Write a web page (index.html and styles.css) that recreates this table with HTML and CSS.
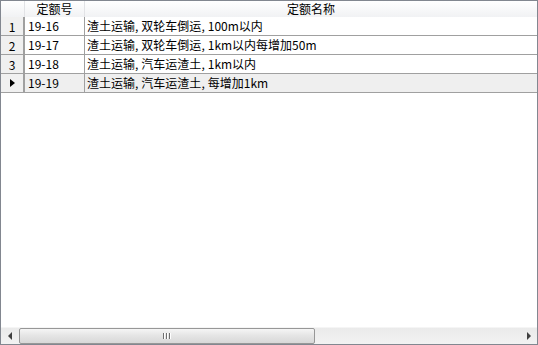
FILE: index.html
```html
<!DOCTYPE html>
<html lang="zh-CN">
<head>
<meta charset="utf-8">
<link rel="stylesheet" href="styles.css">
</head>
<body>
<div class="grid">
  <div class="body">
    <div class="row head">
      <div class="rh"></div>
      <div class="c1">定额号</div>
      <div class="c2">定额名称</div>
    </div>
    <div class="row">
      <div class="rh">1</div>
      <div class="c1">19-16</div>
      <div class="c2">渣土运输<span class="cm">,</span>双轮车倒运<span class="cm">,</span>100m以内</div>
    </div>
    <div class="row">
      <div class="rh">2</div>
      <div class="c1">19-17</div>
      <div class="c2">渣土运输<span class="cm">,</span>双轮车倒运<span class="cm">,</span>1km以内每增加50m</div>
    </div>
    <div class="row">
      <div class="rh">3</div>
      <div class="c1">19-18</div>
      <div class="c2">渣土运输<span class="cm">,</span>汽车运渣土<span class="cm">,</span>1km以内</div>
    </div>
    <div class="row cur">
      <div class="rh"><span class="ind"></span></div>
      <div class="c1">19-19</div>
      <div class="c2">渣土运输<span class="cm">,</span>汽车运渣土<span class="cm">,</span>每增加1km</div>
    </div>
  </div>
  <div class="hscroll">
    <div class="btn"><span class="al"></span></div>
    <div class="track">
      <div class="thumb"><span class="grip"></span><span class="grip"></span><span class="grip"></span></div>
    </div>
    <div class="btn"><span class="ar"></span></div>
  </div>
</div>
</body>
</html>
```
FILE: styles.css
```css
html, body { margin: 0; padding: 0; background: #fff; }
body { font-family: "Noto Sans CJK SC", "Liberation Sans", sans-serif; font-size: 12px; color: #000; }
.grid {
  width: 538px; height: 345px; box-sizing: border-box;
  border: 1px solid #828790; display: flex; flex-direction: column; background: #fff;
}
.body { flex: 1; }
.row { display: grid; grid-template-columns: 24px 60px 1fr; height: 19px; line-height: 17px; }
.row > div { box-sizing: border-box; border-bottom: 1px solid #a0a0a0; white-space: nowrap; overflow: hidden; }
.row .rh { background: #f0f0f0; border-right: 2px solid #a0a0a0; text-align: center; display: flex; align-items: center; justify-content: center; }
.row .c1 { border-right: 1px solid #a0a0a0; padding-left: 3px; }
.row .c2 { padding-left: 2px; }
.cm { margin-right: 3px; }
.row.head { height: 16px; line-height: 15px; background: linear-gradient(#ffffff, #f1f2f4); }
.row.head > div { border-bottom: 0; background: transparent; text-align: center; padding: 0; }
.row.head .rh { border-right: 1px solid #e2e3e6; }
.row.head .c1 { border-right: 1px solid #e2e3e6; }
.row.cur .c1, .row.cur .c2 { background: #efefef; }
.ind { width: 0; height: 0; border-top: 4px solid transparent; border-bottom: 4px solid transparent; border-left: 5px solid #000; margin-left: 1px; }
.hscroll { height: 16px; display: flex; background: linear-gradient(#eaeaea, #f2f2f2); border-top: 1px solid #f5f5f5; }
.btn { width: 17px; display: flex; align-items: center; justify-content: center; }
.al { width: 0; height: 0; border-top: 4px solid transparent; border-bottom: 4px solid transparent; border-right: 4px solid #404040; }
.ar { width: 0; height: 0; border-top: 4px solid transparent; border-bottom: 4px solid transparent; border-left: 4px solid #404040; }
.track { flex: 1; padding: 0 0 0 1px; display: flex; }
.thumb {
  width: 296px; box-sizing: border-box; border: 1px solid #979797; border-radius: 2px;
  background: linear-gradient(#f5f5f5, #e4e4e4 50%, #d8d8d8);
  display: flex; align-items: center; justify-content: center; gap: 1px;
}
.grip { width: 1px; height: 6px; background: #707070; box-shadow: 1px 0 0 #fff; margin-right: 1px; }
```
